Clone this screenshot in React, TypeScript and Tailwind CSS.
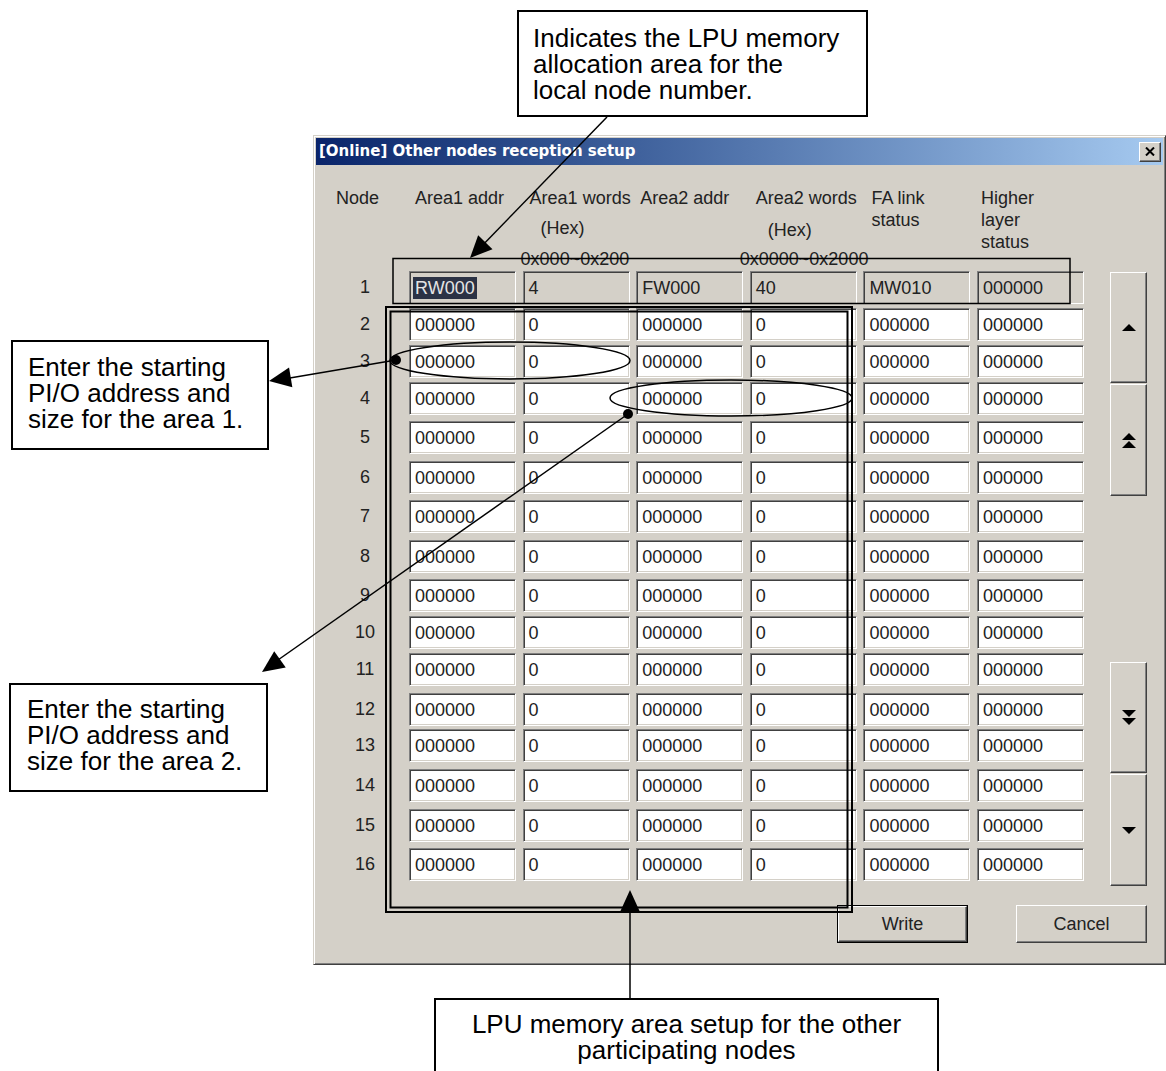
import React from 'react';

const rowHeights = [
  'h-[37px]', 'h-[37px]', 'h-[37px]', 'h-[39px]', 'h-[40px]', 'h-[39px]', 'h-[40px]', 'h-[39px]',
  'h-[37px]', 'h-[37px]', 'h-[40px]', 'h-[36px]', 'h-[40px]', 'h-[40px]', 'h-[39px]', 'h-[33px]',
];

const firstRow = ['RW000', '4', 'FW000', '40', 'MW010', '000000'];
const otherRow = ['000000', '0', '000000', '0', '000000', '000000'];

const raised =
  'border border-t-white border-l-white border-b-[#404040] border-r-[#404040] shadow-[inset_-1px_-1px_0_#808080,inset_1px_1px_0_#d4d0c8] bg-[#d4d0c8]';

function Field({ value, gray, selected }: { value: string; gray?: boolean; selected?: boolean }) {
  return (
    <div
      className={`h-[33px] flex items-center pl-[5px] border border-t-[#808080] border-l-[#808080] border-b-white border-r-white shadow-[inset_1px_1px_0_#404040,inset_-1px_-1px_0_#d4d0c8] ${
        gray ? 'bg-[#d4d0c8]' : 'bg-white'
      }`}
    >
      {selected ? (
        <span className="bg-[#2b3245] text-[#e4e4e4] leading-[22px] -ml-[2px] px-[2px]">{value}</span>
      ) : (
        <span className="leading-[22px]">{value}</span>
      )}
    </div>
  );
}

function Tri({ down, double }: { down?: boolean; double?: boolean }) {
  const one = down ? '0,0 14,0 7,7' : '0,7 7,0 14,7';
  const two = down ? '0,8 14,8 7,15' : '0,15 7,8 14,15';
  return (
    <svg width="14" height={double ? 15 : 7} viewBox={double ? '0 0 14 15' : '0 0 14 7'}>
      <polygon points={one} fill="#000" />
      {double && <polygon points={two} fill="#000" />}
    </svg>
  );
}

function head(x1: number, y1: number, x2: number, y2: number, len = 22, w = 10) {
  const dx = x2 - x1;
  const dy = y2 - y1;
  const l = Math.hypot(dx, dy);
  const ux = dx / l;
  const uy = dy / l;
  const bx = x2 - ux * len;
  const by = y2 - uy * len;
  return `${x2},${y2} ${bx - uy * w},${by + ux * w} ${bx + uy * w},${by - ux * w}`;
}

export default function App() {
  return (
    <div className="relative w-[1166px] h-[1071px] overflow-hidden bg-white font-['Liberation_Sans',Arial,sans-serif]">
      {/* Dialog */}
      <div className="ml-[313px] mt-[135px] w-[853px] h-[830px] p-[2px] bg-[#d4d0c8] border border-t-[#d4d0c8] border-l-[#d4d0c8] border-b-[#404040] border-r-[#404040] shadow-[inset_1px_1px_0_#fff,inset_-1px_-1px_0_#808080] text-[18px] text-[#222]">
        {/* Title bar */}
        <div className="h-[27px] flex items-center justify-between pl-[3px] pr-[2px] bg-gradient-to-r from-[#0a246a] to-[#a6caf0]">
          <span className="text-white font-bold text-[15px] font-['DejaVu_Sans',sans-serif]">
            [Online] Other nodes reception setup
          </span>
          <div className={`w-[22px] h-[20px] flex items-center justify-center ${raised}`}>
            <svg width="10" height="9" viewBox="0 0 10 9">
              <path d="M1 0.5 L9 8.5 M9 0.5 L1 8.5" stroke="#000" strokeWidth="2" />
            </svg>
          </div>
        </div>

        <div className="flex items-start">
          <div className="w-[768px]">
            {/* Header */}
            <div className="h-[106px] flex pt-[22px] leading-[22px]">
              <div className="w-[93px] pl-[20px]">Node</div>
              <div className="grid grid-cols-[repeat(6,107px)] gap-x-[6.6px] whitespace-nowrap">
                <div className="ml-[6px]">Area1 addr</div>
                <div className="flex flex-col">
                  <span className="ml-[7px]">Area1 words</span>
                  <span className="ml-[18px] mt-[8px]">(Hex)</span>
                  <span className="-ml-[2px] mt-[9px]">0x000~0x200</span>
                </div>
                <div className="ml-[4px]">Area2 addr</div>
                <div className="flex flex-col">
                  <span className="ml-[6px]">Area2 words</span>
                  <span className="ml-[18px] mt-[10px]">(Hex)</span>
                  <span className="-ml-[10px] mt-[7px]">0x0000~0x2000</span>
                </div>
                <div className="flex flex-col ml-[8px]">
                  <span>FA link</span>
                  <span>status</span>
                </div>
                <div className="flex flex-col ml-[4px]">
                  <span>Higher</span>
                  <span>layer</span>
                  <span>status</span>
                </div>
              </div>
            </div>

            {/* Rows */}
            {rowHeights.map((h, i) => {
              const vals = i === 0 ? firstRow : otherRow;
              return (
                <div key={i} className={`flex items-start ${h}`}>
                  <div className="w-[93px] h-[33px] pl-[5px] flex items-center justify-center">{i + 1}</div>
                  <div className="grid grid-cols-[repeat(6,107px)] gap-x-[6.6px]">
                    {vals.map((v, j) => (
                      <Field key={j} value={v} gray={i === 0} selected={i === 0 && j === 0} />
                    ))}
                  </div>
                </div>
              );
            })}
          </div>

          {/* Scroll buttons */}
          <div className="ml-[26px] w-[37px] pt-[107px] flex flex-col">
            <div className={`h-[111px] flex items-center justify-center ${raised}`}>
              <Tri />
            </div>
            <div className={`h-[112px] mt-[1px] flex items-center justify-center ${raised}`}>
              <Tri double />
            </div>
            <div className={`h-[111px] mt-[166px] flex items-center justify-center ${raised}`}>
              <Tri down double />
            </div>
            <div className={`h-[112px] mt-[1px] flex items-center justify-center ${raised}`}>
              <Tri down />
            </div>
          </div>
        </div>

        {/* Write / Cancel */}
        <div className="flex mt-[19px] ml-[521px]">
          <div className="w-[131px] h-[38px] border border-black">
            <div className={`w-full h-full flex items-center justify-center ${raised}`}>Write</div>
          </div>
          <div className={`ml-[48px] w-[131px] h-[38px] flex items-center justify-center ${raised}`}>Cancel</div>
        </div>
      </div>

      {/* Annotation drawing */}
      <svg className="absolute left-0 top-0 pointer-events-none" width="1166" height="1071" viewBox="0 0 1166 1071">
        <g stroke="#000" fill="none">
          <rect x="393" y="258.5" width="677" height="45" strokeWidth="1.5" />
          <rect x="386" y="307" width="466" height="605" strokeWidth="2" />
          <rect x="390.5" y="311.5" width="457" height="596" strokeWidth="2" />
          <ellipse cx="510" cy="360.5" rx="120" ry="18.5" strokeWidth="1.5" />
          <ellipse cx="731" cy="398" rx="121" ry="18" strokeWidth="1.5" />
          <line x1="607" y1="117" x2="476" y2="252" strokeWidth="1.5" />
          <line x1="396" y1="360" x2="278" y2="380" strokeWidth="1.5" />
          <line x1="628" y1="414" x2="268" y2="667" strokeWidth="1.5" />
          <line x1="630" y1="999" x2="630" y2="900" strokeWidth="1.5" />
        </g>
        <g fill="#000">
          <polygon points={head(607, 117, 470, 258)} />
          <polygon points={head(396, 360, 269, 381)} />
          <polygon points={head(628, 414, 262, 672)} />
          <polygon points={head(630, 999, 630, 890)} />
          <circle cx="396" cy="360" r="5" />
          <circle cx="628" cy="414" r="5" />
        </g>
      </svg>

      {/* Callouts */}
      <div className="absolute left-[517px] top-[10px] w-[351px] h-[107px] bg-white border-2 border-black pl-[14px] pt-[13px] text-[26px] leading-[26px] text-black">
        <div>Indicates the LPU memory</div>
        <div>allocation area for the</div>
        <div>local node number.</div>
      </div>

      <div className="absolute left-[11px] top-[340px] w-[258px] h-[110px] bg-white border-2 border-black pl-[15px] pt-[12px] text-[26px] leading-[26px] text-black">
        <div>Enter the starting</div>
        <div>PI/O address and</div>
        <div>size for the area 1.</div>
      </div>

      <div className="absolute left-[9px] top-[683px] w-[259px] h-[109px] bg-white border-2 border-black pl-[16px] pt-[11px] text-[26px] leading-[26px] text-black">
        <div>Enter the starting</div>
        <div>PI/O address and</div>
        <div>size for the area 2.</div>
      </div>

      <div className="absolute left-[434px] top-[998px] w-[505px] h-[90px] bg-white border-2 border-black pt-[11px] text-center text-[26px] leading-[26px] text-black">
        <div>LPU memory area setup for the other</div>
        <div>participating nodes</div>
      </div>
    </div>
  );
}
